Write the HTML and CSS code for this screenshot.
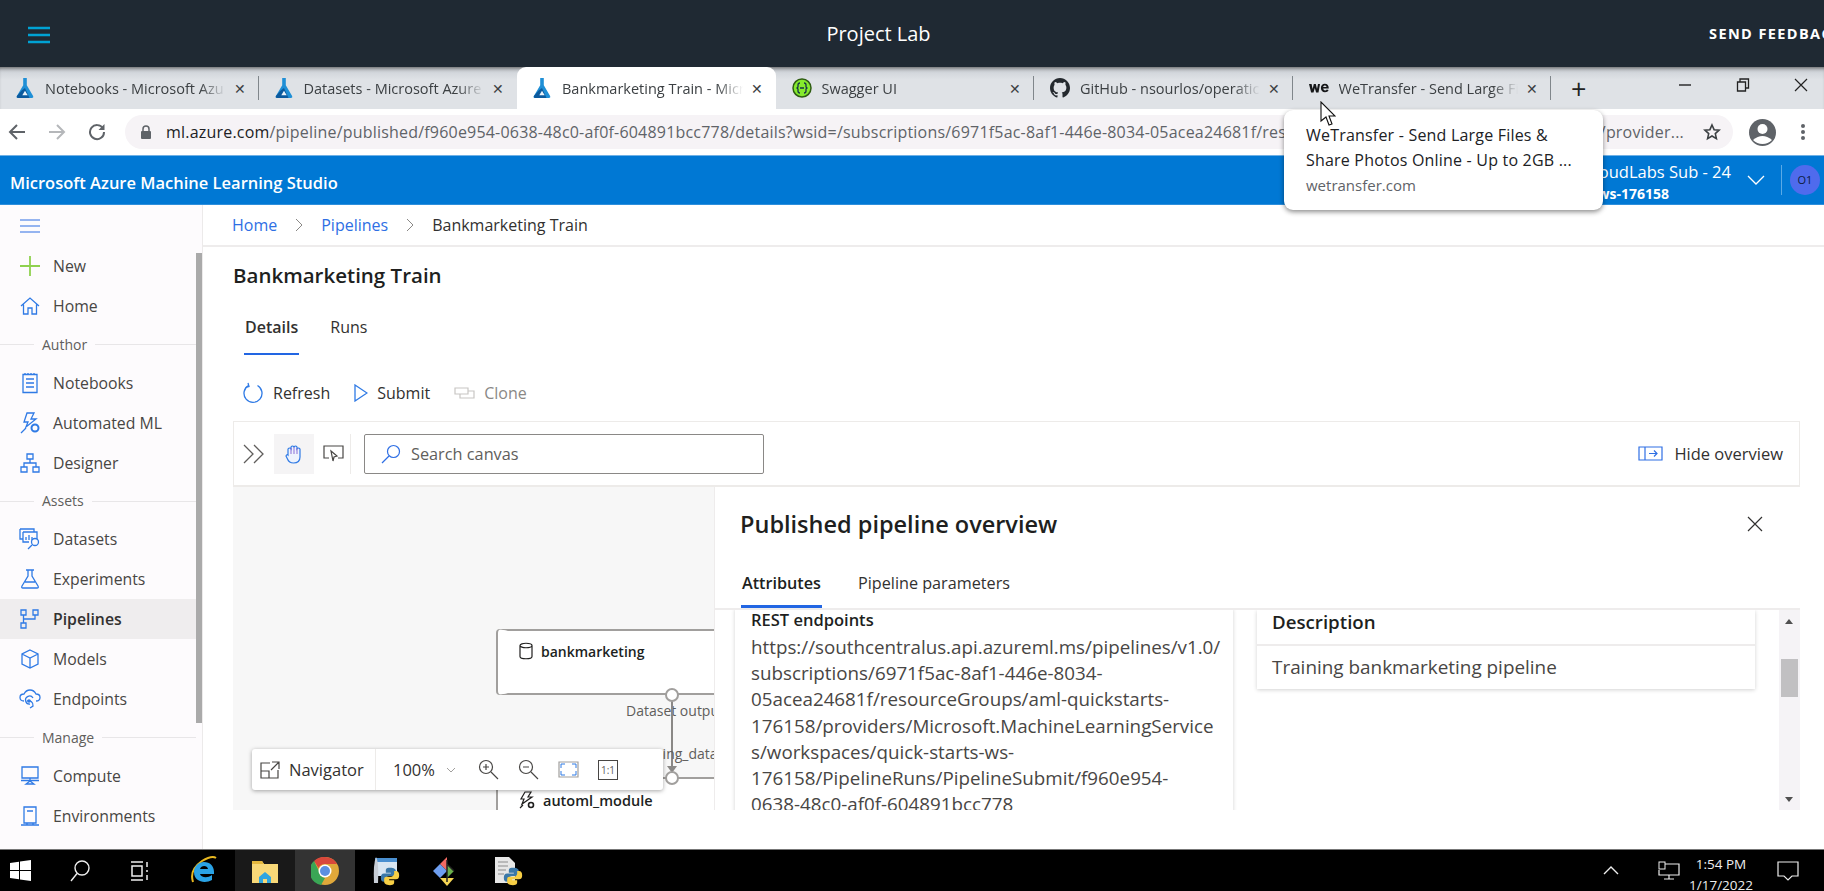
FILE: index.html
```html
<!DOCTYPE html>
<html lang="en">
<head>
    <meta charset="UTF-8">
    <title>Project Lab</title>
    <link rel="stylesheet" href="styles.css">
</head>
<body>
    <svg class="sprite" width="0" height="0">
        <symbol id="flask" viewBox="0 0 20 24">
            <path d="M8 1h4v8l7 12q1 2-1 2H2q-2 0-1-2L8 9z" fill="#1f8fd6"/>
            <path d="M10 12l5 11H2q-2 0-1-2l5-6z" fill="#0b5a9e"/>
            <path d="M10 15l3 5H7z" fill="#eaf4fb"/>
        </symbol>
        <symbol id="python" viewBox="0 0 24 24">
            <path d="M12 2C7 2 7 4 7 6v2h6v1H5c-3 0-4 2-4 5s1 5 4 5h2v-3c0-2 2-4 4-4h5c2 0 3-1 3-3V6c0-2-2-4-7-4z" fill="#3b78a8"/>
            <path d="M12 23c5 0 5-2 5-4v-2h-6v-1h8c3 0 4-2 4-5s-1-5-4-5h-2v3c0 2-2 4-4 4H8c-2 0-3 1-3 3v3c0 2 2 4 7 4z" fill="#f7cf45"/>
        </symbol>
    </svg>

    <div class="lab-bar">
        <svg class="lab-menu" width="22" height="18" viewBox="0 0 22 18"><path d="M0 2h22M0 9h22M0 16h22" stroke="#00a2d4" stroke-width="2.5"/></svg>
        <span class="lab-title">Project Lab</span>
        <span class="lab-feedback">SEND FEEDBACK</span>
    </div>

    <div class="tab-strip">
        <div class="tab">
            <svg class="fav-lab" width="18" height="22"><use href="#flask"/></svg>
            <span class="tab-title">Notebooks - Microsoft Azu</span>
            <span class="tab-close">✕</span>
        </div>
        <div class="tab">
            <svg class="fav-lab" width="18" height="22"><use href="#flask"/></svg>
            <span class="tab-title">Datasets - Microsoft Azure</span>
            <span class="tab-close">✕</span>
        </div>
        <div class="tab tab-active">
            <svg class="fav-lab" width="18" height="22"><use href="#flask"/></svg>
            <span class="tab-title">Bankmarketing Train - Micr</span>
            <span class="tab-close">✕</span>
        </div>
        <div class="tab">
            <svg width="20" height="20" viewBox="0 0 20 20"><circle cx="10" cy="10" r="9" fill="#85ea2d" stroke="#2f5d12" stroke-width="1.5"/><path d="M8 5q-2 0-2 2v2l-1 1 1 1v2q0 2 2 2M12 5q2 0 2 2v2l1 1-1 1v2q0 2-2 2M8 10h4" fill="none" stroke="#173647" stroke-width="1.3"/></svg>
            <span class="tab-title">Swagger UI</span>
            <span class="tab-close">✕</span>
        </div>
        <div class="tab">
            <svg width="20" height="20" viewBox="0 0 16 16"><path fill="#24292e" d="M8 0C3.600 0 0 3.600 0 8c0 3.500 2.300 6.500 5.500 7.600.4.100.5-.2.5-.4v-1.400c-2.200.5-2.700-1-2.700-1-.4-.9-.9-1.200-.9-1.200-.7-.5.100-.5.100-.5.800.1 1.200.8 1.200.8.700 1.200 1.900.9 2.300.7.100-.5.3-.9.5-1.100-1.800-.2-3.600-.9-3.600-4 0-.9.3-1.600.8-2.100-.1-.2-.4-1 .1-2.100 0 0 .7-.2 2.200.8.600-.2 1.300-.3 2-.3s1.400.1 2 .3c1.500-1 2.200-.8 2.200-.8.4 1.100.2 1.900.1 2.100.5.600.8 1.300.8 2.100 0 3.100-1.900 3.700-3.700 3.900.3.3.6.8.6 1.500v2.200c0 .2.100.5.6.4C13.700 14.500 16 11.500 16 8c0-4.400-3.600-8-8-8z"/></svg>
            <span class="tab-title">GitHub - nsourlos/operatic</span>
            <span class="tab-close">✕</span>
        </div>
        <div class="tab">
            <svg width="20" height="14" viewBox="0 0 20 14"><path d="M0 3h2.600l1 5 1.200-5h2l1.200 5 1-5h2L9.500 11.500H7.100L5.800 7l-1.300 4.500H2.100zM15.800 2.800c2.700 0 4 1.900 4 4.800h-5.600c.1 1.200.9 1.800 1.900 1.800.8 0 1.300-.3 1.600-.9l1.900.6c-.6 1.400-1.900 2.200-3.600 2.200-2.500 0-4.100-1.700-4.100-4.300s1.500-4.200 3.900-4.200zm1.700 3.300c-.1-1-.7-1.500-1.700-1.500-.9 0-1.500.5-1.600 1.500z" fill="#17181a"/></svg>
            <span class="tab-title">WeTransfer - Send Large Fi</span>
            <span class="tab-close">✕</span>
        </div>
        <span class="tab-new">+</span>
        <div class="win-controls">
            <svg width="14" height="14" viewBox="0 0 14 14"><path d="M1 7h12" stroke="#222" stroke-width="1.4"/></svg>
            <svg width="14" height="14" viewBox="0 0 14 14"><path d="M1.500 4h8v9h-8zM4 4V1h8.500v9h-3" fill="none" stroke="#222" stroke-width="1.3"/></svg>
            <svg width="14" height="14" viewBox="0 0 14 14"><path d="M1 1l12 12M13 1L1 13" stroke="#222" stroke-width="1.2"/></svg>
        </div>
    </div>

    <div class="address-bar">
        <svg class="nav-icon" width="18" height="18" viewBox="0 0 18 18"><path d="M17 9H2M9 2L2 9l7 7" fill="none" stroke="#5f6368" stroke-width="2"/></svg>
        <svg class="nav-icon" width="18" height="18" viewBox="0 0 18 18"><path d="M1 9h15M9 2l7 7-7 7" fill="none" stroke="#b5b7ba" stroke-width="2"/></svg>
        <svg class="nav-icon" width="18" height="18" viewBox="0 0 18 18"><path d="M15 5.500A7 7 0 1 0 16 9" fill="none" stroke="#5f6368" stroke-width="2"/><path d="M16.500 1v6h-6z" fill="#5f6368"/></svg>
        <div class="omnibox">
            <svg width="12" height="15" viewBox="0 0 12 15"><path d="M3 6V4a3 3 0 0 1 6 0v2" fill="none" stroke="#5f6368" stroke-width="1.5"/><rect x="1" y="6" width="10" height="8" rx="1" fill="#5f6368"/></svg>
            <span class="url"><b>ml.azure.com</b>/pipeline/published/f960e954-0638-48c0-af0f-604891bcc778/details?wsid=/subscriptions/6971f5ac-8af1-446e-8034-05acea24681f/resourcegroups/aml-quickstarts-176158</span>
            <span class="url-end">/provider...</span>
            <svg class="star" width="18" height="18" viewBox="0 0 18 18"><path d="M9 2l2.100 4.700 5 .5-3.800 3.400 1.100 5L9 13l-4.400 2.600 1.100-5L1.900 7.200l5-.5z" fill="none" stroke="#3c4043" stroke-width="1.6"/></svg>
        </div>
        <svg class="avatar" width="27" height="27" viewBox="0 0 27 27"><circle cx="13.500" cy="13.500" r="13.500" fill="#5f6368"/><circle cx="13.500" cy="10" r="5" fill="#fff"/><path d="M4 21q9.500-8 19 0q-4 4-9.500 4T4 21z" fill="#fff"/></svg>
        <svg class="dots" width="4" height="18" viewBox="0 0 4 18"><circle cx="2" cy="3" r="2" fill="#5f6368"/><circle cx="2" cy="9" r="2" fill="#5f6368"/><circle cx="2" cy="15" r="2" fill="#5f6368"/></svg>
    </div>

    <div class="studio-bar">
        <span class="studio-name">Microsoft Azure Machine Learning Studio</span>
        <div class="studio-account">
            <div class="account-text">
                <span>CloudLabs Sub - 24</span>
                <b>quick-starts-ws-176158</b>
            </div>
            <svg width="18" height="10" viewBox="0 0 18 10"><path d="M1 1l8 8 8-8" fill="none" stroke="#fff" stroke-width="1.3"/></svg>
            <span class="account-sep"></span>
            <span class="account-badge">O1</span>
        </div>
    </div>

    <div class="studio">
        <nav class="sidebar">
            <div class="side-scroll"></div>
            <div class="side-top">
                <svg width="22" height="14" viewBox="0 0 22 14"><path d="M0 1h20M0 7h20M0 13h20" stroke="#2f6fe4" stroke-width="1.2"/></svg>
            </div>
            <a class="side-item">
                <svg width="22" height="22" viewBox="0 0 22 22"><path d="M11 1v20M1 11h20" stroke="#8fd14f" stroke-width="1.8"/></svg>
                New
            </a>
            <a class="side-item">
                <svg width="20" height="20" viewBox="0 0 20 20"><path d="M1 10l9-8 9 8M3.500 8.500V18h4.500v-6h4v6h4.500V8.500" fill="none" stroke="#2f7ae5" stroke-width="1.3"/></svg>
                Home
            </a>
            <div class="side-group"><span>Author</span></div>
            <a class="side-item">
                <svg width="20" height="22" viewBox="0 0 20 22"><path d="M3 2.500h14v18H3zM6 7h8M6 11h8M6 15h8M5 1v2M8 1v2M11 1v2M14 1v2" fill="none" stroke="#2f7ae5" stroke-width="1.3"/></svg>
                Notebooks
            </a>
            <a class="side-item">
                <svg width="22" height="22" viewBox="0 0 22 22"><path d="M8 1h7l-3 6h5L7 15l2-5H5zM2 21l5-5" fill="none" stroke="#2f7ae5" stroke-width="1.3"/><circle cx="16" cy="16" r="3.500" fill="none" stroke="#2f7ae5" stroke-width="2"/></svg>
                Automated ML
            </a>
            <a class="side-item">
                <svg width="20" height="20" viewBox="0 0 20 20"><path d="M7 1h6v5H7zM1 14h6v5H1zM13 14h6v5h-6zM10 6v4M4 14v-4h12v4" fill="none" stroke="#2f7ae5" stroke-width="1.3"/></svg>
                Designer
            </a>
            <div class="side-group"><span>Assets</span></div>
            <a class="side-item">
                <svg width="22" height="22" viewBox="0 0 22 22"><path d="M1 1h14v3M4 4h14v7M4 4v10h6M1 1v10h3" fill="none" stroke="#2f7ae5" stroke-width="1.3"/><path d="M7 12V9M10 12V7M13 12V9" stroke="#2f7ae5" stroke-width="1.3"/><circle cx="16" cy="14" r="3.500" fill="none" stroke="#2f7ae5" stroke-width="1.3"/><path d="M13 17l-4 4" stroke="#2f7ae5" stroke-width="1.3"/></svg>
                Datasets
            </a>
            <a class="side-item">
                <svg width="20" height="20" viewBox="0 0 20 20"><path d="M6 1h8M8 1v6L2 17q-1 2 1 2h14q2 0 1-2L12 7V1M5 13h10" fill="none" stroke="#2f7ae5" stroke-width="1.3"/></svg>
                Experiments
            </a>
            <a class="side-item side-active">
                <svg width="20" height="20" viewBox="0 0 20 20"><path d="M1 1h5v5H1zM13 1h5v5h-5zM1 14h5v5H1zM3.500 6v8M3.500 10H15V6" fill="none" stroke="#2f7ae5" stroke-width="1.3"/></svg>
                Pipelines
            </a>
            <a class="side-item">
                <svg width="20" height="20" viewBox="0 0 20 20"><path d="M10 1l8 4v10l-8 4-8-4V5zM2 5l8 4 8-4M10 9v10" fill="none" stroke="#2f7ae5" stroke-width="1.3"/></svg>
                Models
            </a>
            <a class="side-item">
                <svg width="22" height="20" viewBox="0 0 22 20"><path d="M5 12Q1 12 1 8.500T5 5q2-4 6-4t6 4q4 0 4 3.500T17 12M14 9a4 4 0 1 0-3 6" fill="none" stroke="#2f7ae5" stroke-width="1.3"/><path d="M8 12a4.500 4.500 0 0 1 6 5l-3 2" fill="none" stroke="#2f7ae5" stroke-width="1.3"/><circle cx="10" cy="12" r="1.800" fill="#2f7ae5"/></svg>
                Endpoints
            </a>
            <div class="side-group"><span>Manage</span></div>
            <a class="side-item">
                <svg width="20" height="20" viewBox="0 0 20 20"><path d="M2 1h16v11H2zM1 14.500h18M10 12v3M6 18h8l-4-3z" fill="none" stroke="#2f7ae5" stroke-width="1.3"/></svg>
                Compute
            </a>
            <a class="side-item">
                <svg width="20" height="20" viewBox="0 0 20 20"><path d="M4 1h12v16H4zM7 5h6M1 19h18M7 17v2M13 17v2" fill="none" stroke="#2f7ae5" stroke-width="1.3"/></svg>
                Environments
            </a>
        </nav>

        <main class="content">
            <div class="breadcrumb">
                <a>Home</a>
                <svg width="8" height="14" viewBox="0 0 8 14"><path d="M1 1l6 6-6 6" fill="none" stroke="#8a8886"/></svg>
                <a>Pipelines</a>
                <svg width="8" height="14" viewBox="0 0 8 14"><path d="M1 1l6 6-6 6" fill="none" stroke="#8a8886"/></svg>
                <span>Bankmarketing Train</span>
            </div>

            <div class="page">
                <h1 class="page-title">Bankmarketing Train</h1>
                <div class="page-tabs">
                    <span class="page-tab page-tab-on">Details</span>
                    <span class="page-tab">Runs</span>
                </div>
                <div class="commands">
                    <span class="command">
                        <svg width="22" height="22" viewBox="0 0 22 22"><path d="M6.500 3.500a9 9 0 1 0 9 0" fill="none" stroke="#2f7ae5" stroke-width="1.3"/><path d="M6 1l1 3.500-3.500 1" fill="none" stroke="#2f7ae5" stroke-width="1.3"/></svg>
                        Refresh
                    </span>
                    <span class="command">
                        <svg width="14" height="18" viewBox="0 0 14 18"><path d="M1 1l12 8-12 8z" fill="none" stroke="#2f7ae5" stroke-width="1.3"/></svg>
                        Submit
                    </span>
                    <span class="command command-off">
                        <svg width="21" height="12" viewBox="0 0 21 12"><path d="M1 1h13v6H1zM6 7v4h14V4h-6" fill="none" stroke="#c8c6c4" stroke-width="1.2"/></svg>
                        Clone
                    </span>
                </div>

                <div class="canvas-tools">
                    <svg width="22" height="20" viewBox="0 0 22 20"><path d="M1 1l9 9-9 9M11 1l9 9-9 9" fill="none" stroke="#605e5c" stroke-width="1.3"/></svg>
                    <span class="tool-hand">
                        <svg width="18" height="20" viewBox="0 0 18 20"><path d="M3 11V5q1.500-2 3 0V3q1.500-2 3 0v0q1.500-2 3 0v2q1.500-2 3 0v8q0 6-6.500 6Q4 19 2.500 15L1 12q1-2 2-1z" fill="#eef3fd" stroke="#2f7ae5" stroke-width="1.2"/><path d="M6 4v6M9 3v7M12 4v6" stroke="#8a6fd8"/></svg>
                    </span>
                    <svg class="tool-select" width="21" height="18" viewBox="0 0 21 18"><path d="M6 13H1V1h19v12h-5" fill="none" stroke="#484644" stroke-width="1.2"/><path d="M8 6l6 5-3 1-1 4z" fill="#fff" stroke="#484644" stroke-width="1.2"/></svg>
                    <span class="tool-sep"></span>
                    <div class="tool-search">
                        <svg width="20" height="20" viewBox="0 0 20 20"><circle cx="12.500" cy="7.500" r="6" fill="none" stroke="#2f6fe4" stroke-width="1.2"/><path d="M8 12l-7 7" stroke="#2f6fe4" stroke-width="1.2"/></svg>
                        <span>Search canvas</span>
                    </div>
                    <span class="tool-hide">
                        <svg width="25" height="15" viewBox="0 0 25 15"><path d="M1 1h23v13H1zM7 1v13M11 7.500h8M16 4.500l3 3-3 3" fill="none" stroke="#2f6fe4" stroke-width="1.2"/></svg>
                        Hide overview
                    </span>
                </div>

                <div class="canvas">
                    <div class="diagram">
                        <div class="node node-data">
                            <svg width="14" height="18" viewBox="0 0 14 18"><path d="M1 3.500v11c0 3 12 3 12 0v-11M1 3.500c0-3 12-3 12 0s-12 3-12 0z" fill="none" stroke="#201f1e" stroke-width="1.2"/></svg>
                            <b>bankmarketing</b>
                        </div>
                        <span class="edge-label label-out">Dataset output</span>
                        <span class="edge-line"></span>
                        <span class="port port-out"></span>
                        <span class="edge-label label-in">training_data</span>
                        <div class="node node-automl">
                            <svg width="16" height="18" viewBox="0 0 16 18"><path d="M6 1h6L9 6h4L3 13l2-5H2zM1 17l3-3" fill="none" stroke="#201f1e" stroke-width="1.2"/><circle cx="12" cy="14" r="2.500" fill="none" stroke="#201f1e" stroke-width="1.6"/></svg>
                            <b>automl_module</b>
                        </div>
                        <span class="port port-in"></span>
                        <div class="navigator">
                            <span class="nav-label">
                                <svg width="20" height="18" viewBox="0 0 20 18"><path d="M10 2H1v15h17V9M1 10h8v7M12 1h7v7M19 1l-8 8" fill="none" stroke="#484644" stroke-width="1.2"/></svg>
                                Navigator
                            </span>
                            <span class="nav-zoom">
                                100%
                                <svg class="nav-chev" width="10" height="6" viewBox="0 0 10 6"><path d="M1 1l4 4 4-4" fill="none" stroke="#a19f9d"/></svg>
                                <svg class="nav-plus" width="21" height="21" viewBox="0 0 21 21"><circle cx="8" cy="8" r="6.500" fill="none" stroke="#484644" stroke-width="1.2"/><path d="M13 13l7 7M5 8h6M8 5v6" stroke="#484644" stroke-width="1.2"/></svg>
                                <svg width="21" height="21" viewBox="0 0 21 21"><circle cx="8" cy="8" r="6.500" fill="none" stroke="#484644" stroke-width="1.2"/><path d="M13 13l7 7M5 8h6" stroke="#484644" stroke-width="1.2"/></svg>
                                <svg width="21" height="17" viewBox="0 0 21 17"><path d="M1 1h19v15H1z" fill="none" stroke="#a19f9d" stroke-width="1.2"/><path d="M3 7V3h4M14 3h4v4M18 10v4h-4M7 14H3v-4" fill="none" stroke="#2f7ae5"/></svg>
                                <span class="nav-one">1:1</span>
                            </span>
                        </div>
                    </div>

                    <aside class="panel">
                        <div class="panel-head">
                            <h2>Published pipeline overview</h2>
                            <svg width="16" height="16" viewBox="0 0 16 16"><path d="M1 1l14 14M15 1L1 15" stroke="#323130" stroke-width="1.2"/></svg>
                        </div>
                        <div class="panel-tabs">
                            <span class="panel-tab panel-tab-on">Attributes</span>
                            <span class="panel-tab">Pipeline parameters</span>
                        </div>
                        <div class="panel-body">
                            <div class="panel-cards">
                                <section class="card card-rest">
                                    <b>REST endpoints</b>
                                    <p>https://southcentralus.api.azureml.ms/pipelines/v1.0/<br>subscriptions/6971f5ac-8af1-446e-8034-<br>05acea24681f/resourceGroups/aml-quickstarts-<br>176158/providers/Microsoft.MachineLearningService<br>s/workspaces/quick-starts-ws-<br>176158/PipelineRuns/PipelineSubmit/f960e954-<br>0638-48c0-af0f-604891bcc778</p>
                                </section>
                                <section class="card card-desc">
                                    <div class="card-head">Description</div>
                                    <div class="card-text">Training bankmarketing pipeline</div>
                                </section>
                            </div>
                            <div class="panel-scroll">
                                <i class="arrow-up"></i>
                                <span class="thumb"></span>
                                <i class="arrow-down"></i>
                            </div>
                        </div>
                    </aside>
                </div>
            </div>
        </main>
    </div>

    <footer class="taskbar">
        <svg class="start" width="21" height="21" viewBox="0 0 21 21"><path d="M0 3l9-1.300V10H0zM10 1.500L21 0v10H10zM0 11h9v8.300L0 18zM10 11h11v10l-11-1.500z" fill="#fff"/></svg>
        <svg class="task-search" width="20" height="22" viewBox="0 0 20 22"><circle cx="12" cy="8" r="7" fill="none" stroke="#eee" stroke-width="1.4"/><path d="M7 13.500L1 21" stroke="#eee" stroke-width="1.4"/></svg>
        <svg class="task-view" width="20" height="20" viewBox="0 0 20 20"><path d="M2 5h10v10H2zM1 1h12M1 19h12M17 1v5M17 9v2M17 14v5" fill="none" stroke="#eee" stroke-width="1.5"/></svg>
        <span class="task-app task-ie">
            <svg width="28" height="30" viewBox="0 0 28 30"><path d="M3 26Q-1 14 12 5 22-1 26 2" fill="none" stroke="#e8b820" stroke-width="2"/><path d="M14 6c6 0 10 4 10 10v2H10c.5 3 7 5 12 1v5c-7 4-18 2-18-8C4 10 9 6 14 6zm4 7c-.5-4-7-4-8 0z" fill="#2aa3e6"/></svg>
        </span>
        <span class="task-app task-files">
            <svg width="28" height="26" viewBox="0 0 28 26"><path d="M1 3h10l2 3h14v19H1z" fill="#f8d878"/><path d="M1 3h10l2 3H1z" fill="#e5b83e"/><path d="M8 25v-6l6-5 6 5v6h-4v-4h-4v4z" fill="#2fa5e0"/></svg>
        </span>
        <span class="task-app task-chrome">
            <svg width="28" height="28" viewBox="0 0 28 28"><circle cx="14" cy="14" r="14" fill="#e0a83a"/><path d="M14 0a14 14 0 0 1 12.100 7H14a7 7 0 0 0-6.500 4L3 4a14 14 0 0 1 11-4z" fill="#d9483b"/><path d="M3 4l5 10a7 7 0 0 0 6 7l-4 7A14 14 0 0 1 3 4z" fill="#3aa655"/><circle cx="14" cy="14" r="6.500" fill="#fff"/><circle cx="14" cy="14" r="5" fill="#5b8fe0"/></svg>
        </span>
        <span class="task-app task-idle">
            <svg width="30" height="30" viewBox="0 0 30 30"><path d="M4 2h22v18H4z" fill="#d9e6f2"/><path d="M4 2h22v4H4z" fill="#4a8fd0"/><path d="M5 1q3 5 2 26H3Q2 8 5 1z" fill="#c7cdd6"/><use href="#python" x="9" y="10" width="20" height="20"/></svg>
        </span>
        <span class="task-app task-idle">
            <svg width="30" height="30" viewBox="0 0 30 30"><path d="M15 15L8 8l7-7z" fill="#f26a63"/><path d="M15 8l7 7-7 7z" fill="#6ab04c"/><path d="M1 15l7-7 7 7-7 7z" fill="#6e9ef0"/><path d="M8 22h14l-7 8z" fill="#f6d654"/><path d="M15 4v22M22 15l-6-6" stroke="#222" stroke-width="1.5"/></svg>
        </span>
        <span class="task-app task-idle">
            <svg width="30" height="30" viewBox="0 0 30 30"><path d="M2 1h14l6 6v20H2z" fill="#e6e6e6"/><path d="M5 6h10M5 10h10M5 14h8M5 18h6" stroke="#aaa" stroke-width="1.5"/><use href="#python" x="10" y="10" width="20" height="20"/></svg>
        </span>
        <div class="tray">
            <svg width="16" height="9" viewBox="0 0 16 9"><path d="M1 8l7-7 7 7" fill="none" stroke="#eee" stroke-width="1.4"/></svg>
            <svg class="tray-net" width="22" height="20" viewBox="0 0 22 20"><path d="M5 3h16v11H1V9M11 14v4M6 18h10" fill="none" stroke="#eee" stroke-width="1.2"/><rect x="1" y="1" width="6" height="7" fill="#000" stroke="#eee"/></svg>
            <div class="clock"><span>1:54 PM</span><span>1/17/2022</span></div>
            <svg class="tray-note" width="22" height="20" viewBox="0 0 22 20"><path d="M1 1h20v14h-6l-4 4-4-4H1z" fill="none" stroke="#eee" stroke-width="1.2"/></svg>
        </div>
    </footer>

    <div class="tooltip">
        <div>WeTransfer - Send Large Files &amp;</div>
        <div>Share Photos Online - Up to 2GB ...</div>
        <div class="tooltip-host">wetransfer.com</div>
    </div>
    <svg class="cursor" width="16" height="25" viewBox="0 0 16 25"><path d="M1 1v19l5-4 3 8 3-1-3-8h6z" fill="#fff" stroke="#111" stroke-width="1.1"/></svg>
</body>
</html>
```

FILE: styles.css
```css
* {
    box-sizing: border-box;
}

html,
body {
    margin: 0;
    height: 891px;
    overflow: hidden;
}

body {
    display: flex;
    flex-direction: column;
    position: relative;
    width: 1824px;
    font-family: 'Open Sans', sans-serif;
    color: #323130;
    background: #fff;
}

svg {
    flex: none;
    display: block;
}

.sprite {
    position: absolute;
}

/* lab header */
.lab-bar {
    flex: 0 0 67px;
    display: flex;
    align-items: center;
    justify-content: center;
    position: relative;
    padding-right: 67px;
    background-color: #1f2933;
    color: white;
    overflow: hidden;
}

.lab-menu {
    position: absolute;
    left: 28px;
    top: 26px;
}

.lab-title {
    font-size: 20px;
}

.lab-feedback {
    position: absolute;
    left: 1709px;
    font-size: 14.5px;
    font-weight: 700;
    letter-spacing: 1.4px;
    white-space: nowrap;
}

/* browser tabs */
.tab-strip {
    flex: 0 0 42px;
    display: flex;
    align-items: center;
    background: linear-gradient(#c9ced4, #dfe2e6 30%);
    box-shadow: inset 0 4px 4px -3px #555;
}

.tab {
    flex: 0 0 258.5px;
    min-width: 0;
    height: 42px;
    position: relative;
    display: flex;
    align-items: center;
    padding: 0 13px 0 16px;
    font-size: 14.5px;
    color: #3c4043;
}

.tab::after {
    content: "";
    position: absolute;
    right: 0;
    top: 9px;
    height: 24px;
    width: 1px;
    background: #80868b;
}

.tab:nth-child(2)::after,
.tab:nth-child(3)::after {
    display: none;
}

.tab-active {
    background: #fff;
    border-radius: 9px 9px 0 0;
}

.fav-lab {
    margin-right: 1px;
}

.tab-title {
    flex: 1;
    min-width: 0;
    margin-left: 10px;
    overflow: hidden;
    white-space: nowrap;
    mask-image: linear-gradient(to left, transparent 0, #000 26px);
}

.tab-close {
    font-size: 14px;
    margin-left: 8px;
    color: #3c4043;
}

.tab-new {
    margin-left: 20px;
    font-size: 27px;
    color: #222;
}

.win-controls {
    margin-left: auto;
    display: flex;
    gap: 44px;
    padding-right: 16px;
    margin-top: -6px;
}

/* address bar */
.address-bar {
    flex: 0 0 46px;
    display: flex;
    align-items: center;
    background: #fff;
    padding-left: 8px;
}

.nav-icon {
    margin-right: 22px;
}

.omnibox {
    flex: 0 0 1608px;
    margin-left: -3px;
    height: 34px;
    display: flex;
    align-items: center;
    padding: 0 12px 0 15px;
    background: #f6f3f6;
    border-radius: 17px;
    font-size: 16px;
    letter-spacing: 0.2px;
    color: #5f6368;
}

.url {
    width: 1200px;
    margin-left: 14px;
    overflow: hidden;
    white-space: nowrap;
}

.url b {
    font-weight: 400;
    color: #202124;
}

.url-end {
    margin-left: auto;
}

.star {
    margin-left: 19px;
}

.avatar {
    margin-left: 16px;
}

.dots {
    margin-left: 25px;
}

/* studio header */
.studio-bar {
    flex: 0 0 50px;
    min-height: 0;
    display: flex;
    align-items: center;
    justify-content: space-between;
    background-color: #0078d4;
    border-top: 1px solid #6fb1e6;
    border-bottom: 1px solid #2e8fdc;
    padding-left: 10px;
    color: white;
}

.studio-name {
    margin-top: 5px;
    font-size: 16.5px;
    font-weight: 600;
}

.studio-account {
    display: flex;
    align-items: center;
}

.account-text {
    display: flex;
    flex-direction: column;
    align-items: flex-end;
    font-size: 16.5px;
    line-height: 21.5px;
    margin: 5px 16px 0 0;
    white-space: nowrap;
}

.account-text b {
    font-size: 14px;
    font-weight: 700;
    margin-right: 62px;
}

.account-sep {
    width: 1px;
    height: 30px;
    background: #5aaae6;
    margin: 0 8px 0 16px;
}

.account-badge {
    width: 30px;
    height: 30px;
    border-radius: 50%;
    margin-right: 4px;
    background: #4f6bed;
    color: #0d1b3e;
    font-size: 11px;
    line-height: 30px;
    text-align: center;
}

/* studio layout */
.studio {
    flex: 1;
    min-height: 0;
    display: flex;
}

.sidebar {
    flex: 0 0 203px;
    position: relative;
    background-color: #fdfbfd;
    border-right: 1px solid #eceaea;
    overflow: hidden;
}

.side-scroll {
    position: absolute;
    right: 0;
    top: 48px;
    width: 6px;
    height: 470px;
    background: #aaa;
}

.side-top {
    height: 41px;
    display: flex;
    align-items: center;
    padding-left: 20px;
}

.side-item {
    height: 40px;
    display: flex;
    align-items: center;
    font-size: 15.8px;
    color: #484644;
    padding-left: 19px;
    margin-right: 6px;
}

.side-item svg {
    width: 22px;
    margin-right: 12px;
}

.side-active {
    background-color: #efedee;
    font-weight: 600;
    color: #323130;
}

.side-group {
    height: 36.5px;
    display: flex;
    align-items: center;
    margin-right: 6px;
    padding-left: 34px;
    position: relative;
    font-size: 14px;
    color: #605e5c;
}

.side-group span {
    background: #fdfbfd;
    padding: 0 8px;
    position: relative;
}

.side-group::before {
    content: "";
    position: absolute;
    left: 0;
    right: 0;
    top: 50%;
    height: 1px;
    background: #e8e6e8;
}

.content {
    flex: 1;
    min-width: 0;
    display: flex;
    flex-direction: column;
}

.breadcrumb {
    flex: 0 0 42px;
    display: flex;
    align-items: center;
    gap: 18px;
    padding-left: 29px;
    border-bottom: 2px solid #eeecec;
    font-size: 16px;
}

.breadcrumb a {
    color: #2f6fe4;
}

.page {
    padding: 0 24px 0 30px;
}

.page-title {
    margin: 14px 0 0;
    font-size: 20.5px;
    line-height: 28px;
    font-weight: 600;
    color: #201f1e;
}

.page-tabs {
    display: flex;
    gap: 31px;
    margin: 25px 0 0 12px;
}

.page-tab {
    height: 41px;
    font-size: 16px;
    line-height: 26px;
    color: #323130;
}

.page-tab-on {
    font-weight: 600;
    border-bottom: 2px solid #2266e3;
    margin-left: -1px;
    padding: 0 1px;
}

.commands {
    display: flex;
    align-items: center;
    height: 40px;
    margin: 18px 0 8px 9px;
    gap: 24px;
    font-size: 16px;
}

.command {
    display: flex;
    align-items: center;
    gap: 9px;
}

.command-off {
    color: #8a8886;
}

.canvas-tools {
    height: 66px;
    display: flex;
    align-items: center;
    background: #fff;
    border: 1px solid #edebe9;
    border-bottom-width: 2px;
    padding-left: 9px;
}

.tool-hand {
    width: 40px;
    height: 40px;
    margin-left: 9px;
    display: flex;
    align-items: center;
    justify-content: center;
    background: #f5f4f5;
}

.tool-select {
    margin-left: 9px;
}

.tool-sep {
    width: 1px;
    height: 40px;
    background: #edebe9;
    margin: 0 13px 0 6px;
}

.tool-search {
    flex: 0 0 400px;
    height: 40px;
    display: flex;
    align-items: center;
    gap: 10px;
    padding-left: 16px;
    border: 1px solid #8a8886;
    border-radius: 2px;
    font-size: 16.3px;
    color: #605e5c;
}

.tool-hide {
    margin-left: auto;
    margin-right: 16px;
    display: flex;
    align-items: center;
    gap: 11px;
    font-size: 16.5px;
}

/* canvas */
.canvas {
    display: flex;
    height: 323px;
    background: #f7f7f7;
}

.diagram {
    flex: 1;
    position: relative;
    overflow: hidden;
}

.node {
    position: absolute;
    left: 265px;
    width: 300px;
    display: flex;
    align-items: center;
    background: #fff;
    border: 2px solid #a19f9d;
    border-left-width: 10px;
    border-left-color: #fff;
    box-shadow: -2px 0 0 #a19f9d;
    border-radius: 4px;
    padding-left: 11px;
    font-size: 14px;
    color: #201f1e;
}

.node b {
    margin-left: 8px;
    font-weight: 600;
}

.node-data {
    top: 142px;
    height: 66px;
    padding-bottom: 22px;
}

.node-automl {
    top: 290px;
    height: 60px;
    align-items: flex-start;
    padding-top: 12px;
    font-size: 14.5px;
}

.edge-label {
    position: absolute;
    font-size: 14px;
    color: #605e5c;
    white-space: nowrap;
}

.label-out {
    left: 393px;
    top: 214px;
}

.label-in {
    left: 399px;
    top: 257px;
}

.edge-line {
    position: absolute;
    left: 438px;
    top: 208px;
    width: 2px;
    height: 76px;
    background: #8a8886;
}

.edge-line::after {
    content: "";
    position: absolute;
    left: -4px;
    bottom: -2px;
    border: 5px solid transparent;
    border-top: 7px solid #8a8886;
    border-bottom-width: 0;
}

.port {
    position: absolute;
    left: 432px;
    width: 14px;
    height: 14px;
    border: 2px solid #a19f9d;
    border-radius: 50%;
    background: #fff;
}

.port-out {
    top: 201px;
}

.port-in {
    top: 284px;
}

.navigator {
    position: absolute;
    left: 19px;
    top: 262px;
    width: 411px;
    height: 41px;
    display: flex;
    align-items: center;
    background: #fff;
    border-radius: 3px;
    box-shadow: 0 1px 4px rgba(0, 0, 0, 0.35);
    font-size: 16.5px;
}

.nav-label {
    flex: 0 0 124px;
    height: 100%;
    display: flex;
    align-items: center;
    gap: 9px;
    padding-left: 8px;
    border-right: 1px solid #edebe9;
}

.nav-zoom {
    display: flex;
    align-items: center;
    padding-left: 17px;
    gap: 19px;
}

.nav-chev {
    margin-left: -8px;
}

.nav-plus {
    margin-left: 3px;
}

.nav-one {
    width: 20px;
    height: 20px;
    border: 1px solid #484644;
    font-size: 10px;
    line-height: 18px;
    text-align: center;
    color: #605e5c;
}

/* overview panel */
.panel {
    flex: 0 0 1086px;
    display: flex;
    flex-direction: column;
    min-height: 0;
    background: #fff;
    border-left: 1px solid #eeecec;
}

.panel-head {
    flex: 0 0 73px;
    display: flex;
    align-items: center;
    justify-content: space-between;
    padding: 0 37px 0 25px;
}

.panel-head h2 {
    margin: 0;
    font-size: 23.5px;
    font-weight: 600;
    color: #201f1e;
}

.panel-tabs {
    flex: 0 0 48px;
    display: flex;
    gap: 36px;
    padding-left: 27px;
    border-bottom: 2px solid #eeecec;
}

.panel-tab {
    height: 48px;
    font-size: 16.2px;
    line-height: 46px;
}

.panel-tab-on {
    font-weight: 600;
    color: #201f1e;
    border-bottom: 3px solid #2266e3;
    margin-left: -1px;
    padding: 0 1px;
}

.panel-body {
    flex: 1;
    min-height: 0;
    display: flex;
    overflow: hidden;
}

.panel-cards {
    flex: 1;
    display: flex;
    align-items: flex-start;
    gap: 24px;
    padding-left: 20px;
}

.card {
    background: #fff;
    box-shadow: 0 1px 4px rgba(0, 0, 0, 0.18);
}

.card-rest {
    flex: 0 0 498px;
    height: 260px;
    margin-top: -2px;
    padding-left: 16px;
    line-height: 24px;
}

.card-rest b {
    font-weight: 600;
    color: #201f1e;
    font-size: 16.5px;
}

.card-rest p {
    margin: 2px 0 0;
    font-size: 18.8px;
    line-height: 26.2px;
    color: #484644;
    white-space: nowrap;
}

.card-desc {
    flex: 0 0 498px;
}

.card-head {
    height: 36px;
    padding-left: 15px;
    border-bottom: 2px solid #eeecec;
    font-size: 18.7px;
    font-weight: 600;
    line-height: 24px;
    color: #201f1e;
}

.card-text {
    height: 43px;
    padding-left: 15px;
    font-size: 18.9px;
    line-height: 43px;
    color: #484644;
}

.panel-scroll {
    flex: 0 0 21px;
    position: relative;
    background: #f5f3f6;
}

.thumb {
    position: absolute;
    left: 2px;
    right: 2px;
    top: 49px;
    height: 38px;
    background: #c1c0c2;
}

.arrow-up,
.arrow-down {
    position: absolute;
    left: 6px;
    border: 4px solid transparent;
}

.arrow-up {
    top: 9px;
    border-bottom: 5px solid #505050;
    border-top-width: 0;
}

.arrow-down {
    bottom: 8px;
    border-top: 5px solid #505050;
    border-bottom-width: 0;
}

/* windows taskbar */
.taskbar {
    flex: 0 0 42px;
    display: flex;
    align-items: center;
    background: #000;
    border-top: 1px solid #777;
    color: #eee;
    overflow: hidden;
}

.start {
    margin-left: 10px;
}

.task-search {
    margin-left: 39px;
}

.task-view {
    margin-left: 40px;
}

.task-app {
    flex: 0 0 60px;
    height: 41px;
    display: flex;
    align-items: center;
    justify-content: center;
}

.task-ie {
    margin-left: 24px;
    margin-right: 1px;
}

.task-files {
    background: #191919;
}

.task-chrome {
    background: #333;
}

.task-idle {
    flex-basis: 61px;
}

.tray {
    margin-left: auto;
    display: flex;
    align-items: center;
    padding-right: 25px;
}

.tray-net {
    margin-left: 39px;
}

.clock {
    width: 80px;
    margin: 9px 0 0 1px;
    display: flex;
    flex-direction: column;
    align-items: center;
    font-size: 13.5px;
    line-height: 21px;
}

.tray-note {
    margin-left: 16px;
}

/* floating bits */
.tooltip {
    position: absolute;
    left: 1284px;
    top: 110px;
    width: 319px;
    height: 100px;
    padding: 13px 10px 0 22px;
    background: #fff;
    border-radius: 9px;
    box-shadow: 0 2px 5px rgba(0, 0, 0, 0.45);
    font-size: 16px;
    letter-spacing: 0.2px;
    line-height: 25px;
    color: #202124;
    white-space: nowrap;
}

.tooltip-host {
    font-size: 15px;
    letter-spacing: 0;
    color: #5f6368;
}

.cursor {
    position: absolute;
    left: 1320px;
    top: 101px;
}
```
